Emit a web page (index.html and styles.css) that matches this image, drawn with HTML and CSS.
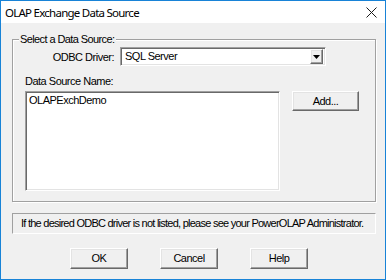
FILE: index.html
```html
<!DOCTYPE html>
<html>
<head>
<meta charset="utf-8">
<link rel="stylesheet" href="styles.css">
</head>
<body>
<div class="window">
  <div class="titlebar">
    <span class="title">OLAP Exchange Data Source</span>
    <svg class="close" width="11" height="11" viewBox="0 0 11 11"><path d="M0.5 0.5 L10.5 10.5 M10.5 0.5 L0.5 10.5" stroke="#1a1a1a" stroke-width="1" fill="none"/></svg>
  </div>
  <div class="content">
    <div class="group">
      <div class="legend">Select a Data Source:</div>
      <div class="driver-row">
        <span class="driver-label">ODBC Driver:</span>
        <div class="combo">
          <span class="combo-text">SQL Server</span>
          <span class="combo-btn"><svg width="7" height="4" viewBox="0 0 7 4"><path d="M0 0 H7 L3.5 4 Z" fill="#000"/></svg></span>
        </div>
      </div>
      <div class="dsn-label">Data Source Name:</div>
      <div class="list-row">
        <div class="listbox"><div class="item">OLAPExchDemo</div></div>
        <button class="btn add">Add...</button>
      </div>
    </div>
    <div class="info">If the desired ODBC driver is not listed, please see your PowerOLAP Administrator.</div>
    <div class="buttons">
      <button class="btn">OK</button>
      <button class="btn">Cancel</button>
      <button class="btn">Help</button>
    </div>
  </div>
</div>
</body>
</html>
```

FILE: styles.css
```css
* { box-sizing: border-box; }
html, body { margin: 0; padding: 0; background: #fff; }
body { width: 386px; height: 280px; overflow: hidden; }

.window {
  width: 386px;
  height: 280px;
  border: 1px solid #1883d7;
  display: flex;
  flex-direction: column;
  font-family: "Liberation Sans", Arial, sans-serif;
  font-size: 11px;
  letter-spacing: -0.5px;
  color: #000;
}

.titlebar {
  height: 22px;
  background: #fff;
  display: flex;
  align-items: center;
  justify-content: space-between;
  padding: 0 8px 0 4px;
}
.title {
  font-family: "Noto Sans", "Open Sans", sans-serif;
  font-size: 11.5px;
  letter-spacing: -0.75px;
  color: #000;
}
.close { display: block; }

.content {
  flex: 1;
  background: #f0f0f0;
  padding: 16px 10px 0 11px;
}

.group {
  width: 364px;
  height: 163px;
  border: 1px solid #a0a0a0;
  box-shadow: inset 1px 1px 0 #fff, 1px 1px 0 #fff;
  padding: 0 0 0 12px;
}
.legend {
  display: inline-block;
  background: #f0f0f0;
  margin: -7px 0 0 -6px;
  padding: 0 2px 0 1px;
  height: 13px;
  line-height: 13px;
  vertical-align: top;
  letter-spacing: -0.6px;
}

.driver-row {
  display: flex;
  align-items: center;
  margin: -5px 0 0 -12px;
  height: 19px;
}
.driver-label {
  width: 101px;
  text-align: right;
  margin-right: 6px;
}
.combo {
  width: 206px;
  height: 19px;
  background: #fff;
  border: 1px solid;
  border-color: #a0a0a0 #fff #fff #a0a0a0;
  box-shadow: inset 1px 1px 0 #696969, inset -1px -1px 0 #e3e3e3;
  display: flex;
  align-items: center;
  justify-content: space-between;
  padding: 2px 2px 2px 4px;
}
.combo-text { line-height: 13px; }
.combo-btn {
  width: 13px;
  height: 15px;
  background: #f0f0f0;
  border: 1px solid;
  border-color: #fff #696969 #696969 #fff;
  box-shadow: inset -1px -1px 0 #a0a0a0, inset 1px 1px 0 #e3e3e3;
  display: flex;
  align-items: center;
  justify-content: center;
}
.combo-btn svg { display: block; }

.dsn-label {
  margin-top: 9px;
  height: 13px;
  line-height: 13px;
}

.list-row {
  display: flex;
  align-items: flex-start;
  margin-top: 3px;
}
.listbox {
  width: 255px;
  height: 100px;
  background: #fff;
  border: 1px solid;
  border-color: #a0a0a0 #fff #fff #a0a0a0;
  box-shadow: inset 1px 1px 0 #696969, inset -1px -1px 0 #e3e3e3;
  padding: 2px 2px 2px 3px;
}
.item { line-height: 13px; }

.btn {
  font-family: "Liberation Sans", Arial, sans-serif;
  font-size: 11px;
  letter-spacing: -0.5px;
  color: #000;
  background: #f0f0f0;
  border: 1px solid;
  border-color: #fff #696969 #696969 #fff;
  box-shadow: inset -1px -1px 0 #a0a0a0, inset 1px 1px 0 #e3e3e3;
  padding: 0;
  margin: 0;
  width: 58px;
  height: 21px;
  line-height: 17px;
}
.btn.add {
  width: 67px;
  height: 20px;
  margin-left: 12px;
}

.info {
  margin-top: 11px;
  width: 364px;
  height: 21px;
  border: 1px solid;
  border-color: #a0a0a0 #fff #fff #a0a0a0;
  padding-left: 8px;
  line-height: 19px;
  white-space: nowrap;
  letter-spacing: -0.75px;
}

.buttons {
  display: flex;
  gap: 32px;
  margin-top: 14px;
  padding-left: 58px;
}
```
